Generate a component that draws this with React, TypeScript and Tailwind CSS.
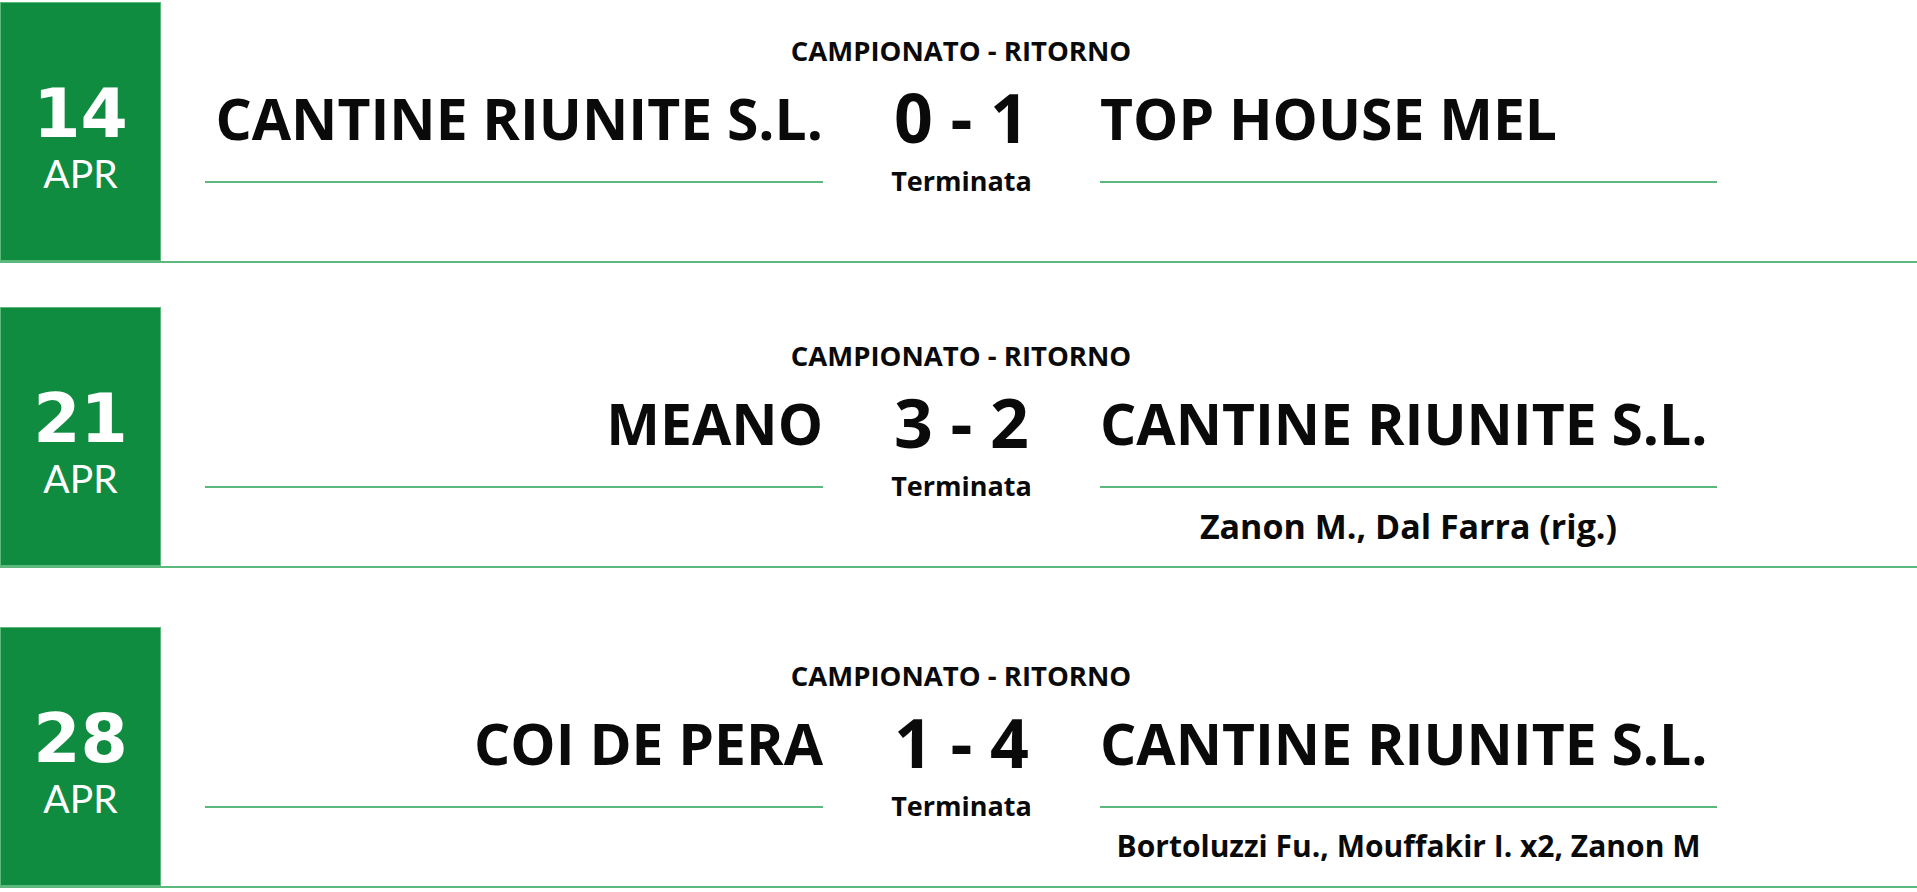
import React from "react";

type Match = {
  day: string;
  month: string;
  home: string;
  away: string;
  score: string;
  homeScorers?: string;
  awayScorers?: string;
  scorersSize?: string;
  spacing: string;
};

const matches: Match[] = [
  {
    day: "14",
    month: "APR",
    home: "CANTINE RIUNITE S.L.",
    away: "TOP HOUSE MEL",
    score: "0 - 1",
    spacing: "mt-[2px]",
  },
  {
    day: "21",
    month: "APR",
    home: "MEANO",
    away: "CANTINE RIUNITE S.L.",
    score: "3 - 2",
    awayScorers: "Zanon M., Dal Farra (rig.)",
    scorersSize: "mt-[21px] text-[34px]",
    spacing: "mt-[44px]",
  },
  {
    day: "28",
    month: "APR",
    home: "COI DE PERA",
    away: "CANTINE RIUNITE S.L.",
    score: "1 - 4",
    awayScorers: "Bortoluzzi Fu., Mouffakir I. x2, Zanon M",
    scorersSize: "mt-[23px] text-[30px]",
    spacing: "mt-[59px]",
  },
];

const TeamColumn = ({
  name,
  scorers,
  scorersSize,
  align,
}: {
  name: string;
  scorers?: string;
  scorersSize?: string;
  align: "left" | "right";
}) => (
  <div className="flex flex-col">
    <div
      className={`mt-[8px] whitespace-nowrap text-[57px] font-bold leading-none ${
        align === "right" ? "text-right" : "text-left"
      }`}
    >
      {name}
    </div>
    <div className="mt-[34px] h-[2px] bg-[#5cb87c]" />
    {scorers && (
      <div className={`${scorersSize} whitespace-nowrap text-center font-bold leading-none`}>
        {scorers}
      </div>
    )}
  </div>
);

const MatchCard = ({ match }: { match: Match }) => (
  <div className={`${match.spacing} flex h-[261px] border-b-2 border-[#5cb87c]`}>
    {/* Date box */}
    <div className="flex h-full w-[161px] shrink-0 flex-col items-center border border-[#5cb87c] bg-[#0f8c40] pt-[77px] text-white">
      <div className="text-[68px] font-bold leading-none [font-family:'DejaVu_Sans',sans-serif]">
        {match.day}
      </div>
      <div className="mt-[6px] text-[39px] leading-none [font-family:Lato,sans-serif]">
        {match.month}
      </div>
    </div>

    {/* Match info */}
    <div className="flex-1 pl-[44px] text-[#0a0a0a] [font-family:'Open_Sans',sans-serif]">
      <div className="w-[1512px] pt-[35px]">
        <div className="text-center text-[27.5px] font-bold leading-none">
          CAMPIONATO - RITORNO
        </div>
        <div className="mt-[17px] grid grid-cols-[618px_277px_617px]">
          <TeamColumn
            name={match.home}
            scorers={match.homeScorers}
            scorersSize={match.scorersSize}
            align="right"
          />
          <div className="flex flex-col items-center">
            <div className="mt-[1px] whitespace-nowrap text-[68px] font-bold leading-none">
              {match.score}
            </div>
            <div className="mt-[16px] text-[27px] font-bold leading-none">Terminata</div>
          </div>
          <TeamColumn
            name={match.away}
            scorers={match.awayScorers}
            scorersSize={match.scorersSize}
            align="left"
          />
        </div>
      </div>
    </div>
  </div>
);

export default function App() {
  return (
    <div className="min-h-screen w-full bg-white">
      {matches.map((match) => (
        <MatchCard key={match.day} match={match} />
      ))}
    </div>
  );
}
